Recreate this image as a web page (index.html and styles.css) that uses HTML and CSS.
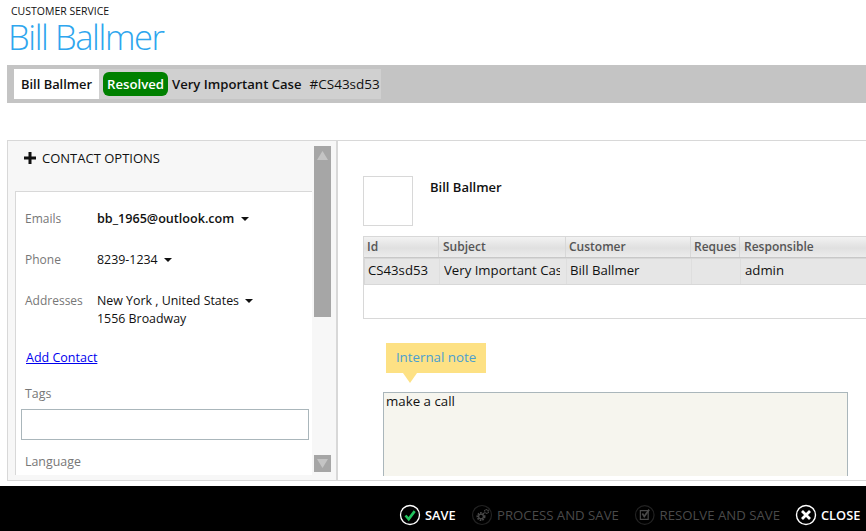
FILE: index.html
```html
<!DOCTYPE html>
<html>

<head>
  <meta charset="UTF-8">
  <title>Customer Service</title>
  <link rel="stylesheet" href="styles.css">
</head>

<body>
  <header class="page-head">
    <div class="page-kicker">CUSTOMER SERVICE</div>
    <h1 class="page-title">Bill Ballmer</h1>
  </header>

  <nav class="crumb-bar">
    <div class="crumb-tab">Bill Ballmer</div>
    <div class="crumb-group">
      <span class="badge">Resolved</span>
      <span class="crumb-subject">Very Important Case</span>
      <span class="crumb-id">#CS43sd53</span>
    </div>
  </nav>

  <main class="panels">
    <section class="side">
      <div class="side-main">
        <h2 class="side-title">
          <svg class="plus" width="12" height="12" viewBox="0 0 12 12"><path d="M4.5 0h3v4.5H12v3H7.5V12h-3V7.5H0v-3h4.5z" /></svg>
          CONTACT OPTIONS
        </h2>
        <div class="side-box">
          <div class="info-row info-first">
            <span class="info-label">Emails</span>
            <span class="info-value strong">bb_1965@outlook.com <i class="caret"></i></span>
          </div>
          <div class="info-row">
            <span class="info-label">Phone</span>
            <span class="info-value">8239-1234 <i class="caret"></i></span>
          </div>
          <div class="info-row">
            <span class="info-label">Addresses</span>
            <span class="info-value">New York , United States <i class="caret"></i><br />1556 Broadway</span>
          </div>
          <a class="add-link" href="#">Add Contact</a>
          <div class="field-label tags-label">Tags</div>
          <input class="tags-input" type="text" />
          <div class="field-label lang-label">Language</div>
        </div>
      </div>
      <div class="scrollbar">
        <div class="scroll-thumb">
          <svg class="scroll-arrow" width="11" height="9" viewBox="0 0 11 9"><path d="M5.5 0L11 9H0z" /></svg>
        </div>
        <div class="scroll-down">
          <svg class="scroll-arrow" width="11" height="9" viewBox="0 0 11 9"><path d="M0 0h11L5.5 9z" /></svg>
        </div>
      </div>
    </section>

    <section class="detail">
      <div class="person">
        <div class="avatar"></div>
        <div class="person-name">Bill Ballmer</div>
      </div>

      <div class="grid">
        <div class="grid-head">
          <div class="col-id">Id</div>
          <div class="col-subject">Subject</div>
          <div class="col-customer">Customer</div>
          <div class="col-req">Reques</div>
          <div class="col-resp">Responsible</div>
        </div>
        <div class="grid-row">
          <div class="col-id">CS43sd53</div>
          <div class="col-subject"><span class="clip">Very Important Case</span></div>
          <div class="col-customer">Bill Ballmer</div>
          <div class="col-req"></div>
          <div class="col-resp">admin</div>
        </div>
      </div>

      <div class="note-tip">Internal note</div>
      <div class="note-box">make a call</div>
    </section>
  </main>

  <footer class="actions">
    <div class="action action-save">
      <svg class="action-icon" width="22" height="22" viewBox="0 0 22 22">
        <circle cx="11" cy="11" r="9.5" fill="none" stroke="#fff" stroke-width="1.3" />
        <path d="M6.5 11.5l3.2 3.6 6-8" fill="none" stroke="#22c55e" stroke-width="2.6" />
      </svg>
      SAVE
    </div>
    <div class="action action-process off">
      <svg class="action-icon" width="22" height="22" viewBox="0 0 22 22">
        <circle cx="11" cy="11" r="9.5" fill="none" stroke="#222" stroke-width="1.2" />
        <circle cx="10" cy="12.5" r="3.6" fill="none" stroke="#4a4a4a" stroke-width="1.8" stroke-dasharray="1.6 1" />
        <circle cx="10" cy="12.5" r="2.4" fill="none" stroke="#4a4a4a" stroke-width="1.2" />
        <circle cx="15.5" cy="7.5" r="1.9" fill="none" stroke="#4a4a4a" stroke-width="1.4" stroke-dasharray="1.2 .6" />
      </svg>
      PROCESS AND SAVE
    </div>
    <div class="action action-resolve off">
      <svg class="action-icon" width="22" height="22" viewBox="0 0 22 22">
        <circle cx="11" cy="11" r="9.5" fill="none" stroke="#222" stroke-width="1.2" />
        <path d="M6.5 6.5h8v9h-8z" fill="none" stroke="#4a4a4a" stroke-width="1.2" />
        <path d="M8.5 9.5l2 3 5-7" fill="none" stroke="#4a4a4a" stroke-width="1.8" />
      </svg>
      RESOLVE AND SAVE
    </div>
    <div class="action">
      <svg class="action-icon" width="22" height="22" viewBox="0 0 22 22">
        <circle cx="11" cy="11" r="9.5" fill="none" stroke="#fff" stroke-width="1.4" />
        <path d="M7 7l8 8M15 7l-8 8" fill="none" stroke="#fff" stroke-width="2.8" />
      </svg>
      CLOSE
    </div>
  </footer>
</body>

</html>
```

FILE: styles.css
```css
* {
  box-sizing: border-box;
}

html,
body {
  height: 100%;
}

body {
  display: flex;
  flex-direction: column;
  margin: 0;
  overflow: hidden;
  background-color: white;
  color: #111;
  font-family: "Open Sans", "Noto Sans", sans-serif;
  font-size: 12.4px;
}

.page-head {
  height: 65px;
  padding: 4px 0 0 8px;
}

.page-kicker {
  margin-left: 3px;
  font-size: 10.5px;
  line-height: 14px;
}

.page-title {
  margin: 2px 0 0;
  color: #2ea6ee;
  font-size: 34.5px;
  font-weight: 300;
  letter-spacing: -1.4px;
  line-height: 34px;
}

.crumb-bar {
  display: flex;
  height: 38px;
  margin-left: 7px;
  padding: 4px 7px;
  background-color: #c4c4c4;
  font-size: 13.1px;
  font-weight: 600;
}

.crumb-tab {
  display: flex;
  align-items: center;
  width: 85px;
  padding-left: 7px;
  background-color: white;
  font-size: 12.9px;
}

.crumb-group {
  display: flex;
  align-items: center;
  width: 282px;
  padding-left: 4px;
  background-color: #d0d0d0;
}

.badge {
  width: 65px;
  height: 24px;
  border-radius: 6px;
  background-color: #008000;
  color: white;
  font-size: 13.2px;
  line-height: 25px;
  text-align: center;
}

.crumb-subject {
  margin-left: 4px;
}

.crumb-id {
  margin-left: 8px;
  font-size: 13.5px;
  font-weight: 400;
}

.panels {
  display: flex;
  height: 341px;
  margin: 37px 0 0 7px;
  border-top: 1px solid #d8d8d8;
  border-bottom: 1px solid #d8d8d8;
}

.side {
  display: flex;
  flex: none;
  width: 331px;
  padding-left: 7px;
  border-right: 2px solid #d8d8d8;
  border-left: 1px solid #d8d8d8;
  background-color: #f7f7f7;
}

.side-main {
  width: 297px;
}

.side-title {
  display: flex;
  align-items: center;
  gap: 6px;
  height: 50px;
  margin: 0 0 0 9px;
  padding-bottom: 16px;
  font-size: 13px;
  font-weight: 400;
}

.plus {
  fill: #111;
}

.side-box {
  height: 284px;
  padding-left: 5px;
  overflow: hidden;
  border-top: 1px solid #d8d8d8;
  border-left: 1px solid #d8d8d8;
  background-color: white;
}

.info-row {
  display: flex;
  margin-top: 23px;
  padding-left: 4px;
  line-height: 18px;
}

.info-first {
  margin-top: 18px;
}

.info-label {
  flex: none;
  width: 72px;
  color: #777;
  font-size: 12px;
}

.info-value.strong {
  font-size: 12.6px;
  font-weight: 600;
}

.caret {
  display: inline-block;
  margin-left: 3px;
  border-top: 4px solid #111;
  border-right: 4px solid transparent;
  border-left: 4px solid transparent;
  vertical-align: 2px;
}

.add-link {
  display: block;
  margin: 21px 0 0 5px;
  color: #0000ee;
  font-size: 12.5px;
  line-height: 18px;
}

.field-label {
  padding-left: 4px;
  color: #777;
  line-height: 18px;
}

.tags-label {
  margin-top: 18px;
}

.tags-input {
  display: block;
  width: 288px;
  height: 31px;
  margin: 6px 0 0;
  border: 1px solid #aab6bb;
  background-color: white;
}

.lang-label {
  margin-top: 13px;
}

.scrollbar {
  display: flex;
  flex-direction: column;
  justify-content: space-between;
  width: 17px;
  height: 326px;
  margin: 5px 0 0 2px;
}

.scroll-thumb {
  display: flex;
  justify-content: center;
  height: 171px;
  padding-top: 5px;
  background-color: #a6a6a6;
}

.scroll-down {
  display: flex;
  justify-content: center;
  height: 17px;
  padding-top: 4px;
  background-color: #a6a6a6;
}

.scroll-arrow {
  fill: #c4c4c4;
}

.detail {
  flex: 1;
  min-width: 0;
  padding: 35px 0 0 25px;
  overflow: hidden;
}

.person {
  display: flex;
  height: 60px;
}

.avatar {
  width: 50px;
  height: 50px;
  border: 1px solid #d8d8d8;
}

.person-name {
  margin: 3px 0 0 17px;
  font-size: 13px;
  font-weight: 600;
  line-height: 17px;
}

.grid {
  width: 520px;
  height: 83px;
  border: 1px solid #d8d8d8;
}

.grid-head,
.grid-row {
  display: grid;
  grid-template-columns: 75px 127px 125px 49px 1fr;
}

.grid-head {
  height: 21px;
  background: linear-gradient(#f2f2f2, #e0e0e0 55%, #ececec);
  border-bottom: 1px solid #c8c8c8;
  color: #555;
  font-size: 12px;
  font-weight: 600;
  line-height: 20px;
}

.grid-head > div {
  padding-left: 3px;
  overflow: hidden;
  border-right: 1px solid #d8d8d8;
  white-space: nowrap;
}

.grid-head .col-subject,
.grid-head .col-resp {
  padding-left: 4px;
}

.grid-row {
  height: 27px;
  border: 1px solid #d8d8d8;
  background-color: #e6e6e6;
  font-size: 13.2px;
  line-height: 23px;
}

.grid-row > div {
  padding-left: 4px;
  border-right: 1px solid #dedede;
  white-space: nowrap;
}

.grid-row .col-id {
  padding-left: 3px;
}

.grid-row .col-customer {
  padding-left: 3px;
}

.clip {
  display: block;
  width: 116px;
  overflow: hidden;
}

.note-tip {
  position: relative;
  width: 100px;
  height: 30px;
  margin: 24px 0 0 23px;
  background-color: #fde184;
  color: #4a9fd0;
  font-size: 13.3px;
  line-height: 28px;
  text-align: center;
}

.note-tip::after {
  position: absolute;
  top: 100%;
  left: 17px;
  border-top: 10px solid #fde184;
  border-right: 7px solid transparent;
  border-left: 7px solid transparent;
  content: "";
}

.note-box {
  width: 465px;
  height: 84px;
  margin: 19px 0 0 20px;
  padding: 0 2px;
  border: 1px solid #aab6bb;
  border-bottom: 0;
  background-color: #f6f5ee;
  font-size: 13.3px;
  line-height: 17px;
}

.actions {
  display: flex;
  flex: 1;
  gap: 15px;
  align-items: center;
  margin-top: 5px;
  padding: 13px 0 0 399px;
  background-color: black;
  color: white;
  font-size: 12.8px;
  font-weight: 600;
}

.action {
  display: flex;
  flex: none;
  align-items: center;
  gap: 4px;
  white-space: nowrap;
}

.action-save {
  width: 57px;
}

.action-process {
  width: 148px;
}

.action-resolve {
  width: 146px;
}

.off {
  color: #4a4a4a;
  font-size: 13.2px;
  font-weight: 500;
}
```
